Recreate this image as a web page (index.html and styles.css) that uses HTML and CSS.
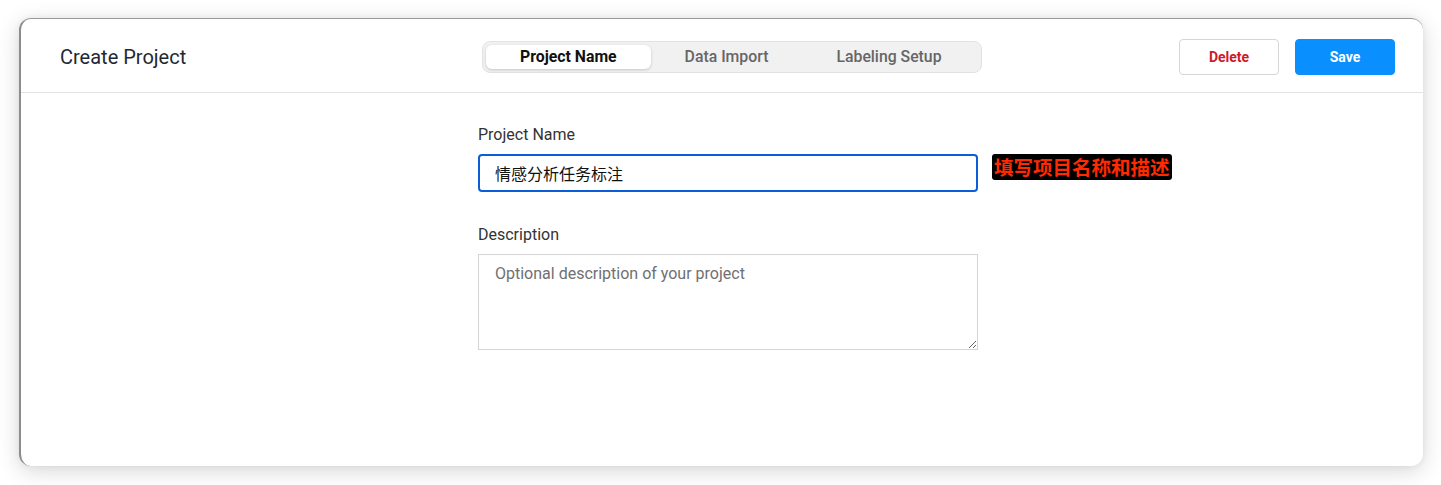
FILE: index.html
```html
<!DOCTYPE html>
<html lang="en">
<head>
<meta charset="utf-8">
<title>Create Project</title>
<link rel="stylesheet" href="styles.css">
</head>
<body>
<div class="window">
  <header class="header">
    <h1 class="title">Create Project</h1>
    <nav class="tabs">
      <span class="tab active">Project Name</span>
      <span class="tab">Data Import</span>
      <span class="tab">Labeling Setup</span>
    </nav>
    <div class="actions">
      <button class="btn btn-delete">Delete</button>
      <button class="btn btn-save">Save</button>
    </div>
  </header>
  <main class="form">
    <div class="field">
      <label class="label">Project Name</label>
      <div class="row">
        <input class="input" type="text" value="情感分析任务标注">
        <span class="note">填写项目名称和描述</span>
      </div>
    </div>
    <div class="field">
      <label class="label">Description</label>
      <textarea class="textarea" placeholder="Optional description of your project"></textarea>
    </div>
  </main>
</div>
</body>
</html>
```
FILE: styles.css
```css
html, body {
  margin: 0;
  padding: 0;
  background: #ffffff;
}
body {
  font-family: Roboto, "Noto Sans CJK SC", "Liberation Sans", sans-serif;
  padding: 18px 18px 19px 19px;
}
.window {
  box-sizing: border-box;
  width: 1404px;
  height: 448px;
  background: #fff;
  border-radius: 12px;
  border-left: 2px solid #8c8c8c;
  border-top: 1px solid #9a9a9a;
  box-shadow: 0 5px 22px rgba(0,0,0,0.16), 0 0 6px rgba(0,0,0,0.06);
  overflow: hidden;
}
.header {
  display: flex;
  align-items: center;
  height: 73px;
  border-bottom: 1px solid #e3e3e3;
  padding: 0 28px 0 39px;
}
.title {
  margin: 0;
  width: 422px;
  font-size: 20px;
  font-weight: 400;
  color: #1f2933;
  position: relative;
  top: 1px;
}
.tabs {
  display: flex;
  box-sizing: border-box;
  width: 500px;
  height: 32px;
  padding: 3px;
  background: #f1f1f1;
  border: 1px solid #e2e2e2;
  border-radius: 8px;
  margin-top: 2px;
}
.tab {
  display: flex;
  align-items: center;
  justify-content: center;
  padding: 0 34px;
  font-size: 15.8px;
  font-weight: 500;
  color: #666;
  border-radius: 6px;
}
.tab.active {
  background: #fff;
  color: #111;
  font-weight: 700;
  box-shadow: 0 1px 3px rgba(0,0,0,0.18);
}
.actions {
  margin-left: auto;
  display: flex;
  gap: 16px;
  margin-top: 2px;
}
.btn {
  box-sizing: border-box;
  width: 100px;
  height: 36px;
  border-radius: 4px;
  font-family: Roboto, sans-serif;
  font-size: 14px;
  font-weight: 700;
  cursor: pointer;
}
.btn-delete {
  background: #fff;
  border: 1px solid #d6d6d6;
  color: #d0192b;
}
.btn-save {
  background: #0a8fff;
  border: 1px solid #0a8fff;
  color: #fff;
}
.form {
  margin-left: 457px;
  padding-top: 32px;
}
.field {
  margin-bottom: 33px;
}
.label {
  display: block;
  font-size: 16px;
  color: #333;
  line-height: 20px;
  margin-bottom: 9px;
}
.row {
  display: flex;
  align-items: flex-start;
  gap: 14px;
}
.input {
  box-sizing: border-box;
  width: 500px;
  height: 38px;
  border: 2px solid #0b5ed7;
  border-radius: 4px;
  padding: 0 15px;
  font-family: Roboto, "Noto Sans CJK SC", sans-serif;
  font-size: 16px;
  color: #111;
  outline: none;
}
.note {
  margin-top: 0;
  background: #000;
  color: #ff2a00;
  font-family: "Noto Sans CJK SC", sans-serif;
  font-weight: 700;
  font-size: 19.5px;
  line-height: 26px;
  padding: 0 2px;
  border-radius: 3px;
}
.textarea {
  display: block;
  box-sizing: border-box;
  width: 500px;
  height: 96px;
  border: 1px solid #d4d4d4;
  border-radius: 0;
  padding: 9px 16px;
  font-family: Roboto, sans-serif;
  font-size: 16px;
  color: #333;
  resize: vertical;
  outline: none;
}
.textarea::placeholder {
  color: #707070;
}
```
